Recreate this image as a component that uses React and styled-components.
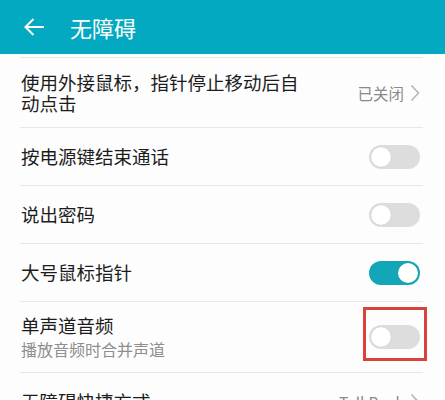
import React from 'react';
import styled, { createGlobalStyle } from 'styled-components';

const GlobalStyle = createGlobalStyle`
  html, body {
    margin: 0;
    padding: 0;
    background: #fdfdfd;
    overflow: hidden;
  }
  body {
    font-family: "Noto Sans CJK SC", "Noto Sans", sans-serif;
  }
`;

const Page = styled.div`
  width: 445px;
  height: 400px;
  overflow: hidden;
  background: #fdfdfd;
`;

const Header = styled.header`
  height: 54px;
  background: #02a9c0;
  display: flex;
  align-items: center;
  padding-left: 23px;
  gap: 25px;
  box-sizing: border-box;
`;

const Title = styled.h1`
  margin: 0;
  font-size: 22px;
  font-weight: 400;
  color: #ffffff;
  line-height: 1;
`;

const List = styled.div`
  padding-top: 3px;
`;

const Row = styled.div`
  margin: 0 22px 0 20px;
  border-top: 1px solid #e8e8e8;
  min-height: ${(p) => p.$height}px;
  box-sizing: border-box;
  display: flex;
  align-items: center;
  justify-content: space-between;
  padding: 0 3px 0 1px;
`;

const TextBlock = styled.div`
  display: flex;
  flex-direction: column;
  max-width: ${(p) => p.$max || 320}px;
`;

const Label = styled.div`
  font-size: 18.5px;
  line-height: 21px;
  color: #1c1c1c;
`;

const Sub = styled.div`
  font-size: 16px;
  line-height: 20px;
  margin-top: 3px;
  color: #8e8e8e;
`;

const Value = styled.div`
  display: flex;
  align-items: center;
  gap: 6px;
  font-size: 15.5px;
  color: #8a8a8a;
`;

const Track = styled.div`
  position: relative;
  width: 51px;
  height: 24px;
  border-radius: 12px;
  background: ${(p) => (p.$on ? '#12a6b8' : '#dddddd')};
  display: flex;
  align-items: center;
  justify-content: ${(p) => (p.$on ? 'flex-end' : 'flex-start')};
  padding: 0 2px;
  box-sizing: border-box;
`;

const Knob = styled.div`
  width: 20px;
  height: 20px;
  border-radius: 50%;
  background: #ffffff;
  box-shadow: 0 0 1px rgba(0, 0, 0, 0.2);
`;

const Highlight = styled.div`
  position: absolute;
  left: -6px;
  right: -7px;
  top: -18px;
  bottom: -12px;
  border: 3px solid #d8433e;
`;

function Chevron() {
  return (
    <svg width="10" height="18" viewBox="0 0 10 18">
      <polyline points="1.5,1.5 8.5,9 1.5,16.5" fill="none" stroke="#b5b5b5" strokeWidth="1.6" />
    </svg>
  );
}

function BackArrow() {
  return (
    <svg width="22" height="20" viewBox="0 0 22 20">
      <path d="M21 10 H2.5 M10.5 2 L2.5 10 L10.5 18" fill="none" stroke="#ffffff" strokeWidth="2" />
    </svg>
  );
}

function Switch({ on, marked }) {
  return (
    <Track $on={on}>
      <Knob />
      {marked && <Highlight />}
    </Track>
  );
}

export default function App() {
  return (
    <Page>
      <GlobalStyle />
      <Header>
        <BackArrow />
        <Title>无障碍</Title>
      </Header>
      <List>
        <Row $height={70}>
          <TextBlock $max={290}>
            <Label>使用外接鼠标，指针停止移动后自动点击</Label>
          </TextBlock>
          <Value>
            已关闭
            <Chevron />
          </Value>
        </Row>
        <Row $height={58}>
          <Label>按电源键结束通话</Label>
          <Switch />
        </Row>
        <Row $height={58}>
          <Label>说出密码</Label>
          <Switch />
        </Row>
        <Row $height={58}>
          <Label>大号鼠标指针</Label>
          <Switch on />
        </Row>
        <Row $height={71}>
          <TextBlock>
            <Label>单声道音频</Label>
            <Sub>播放音频时合并声道</Sub>
          </TextBlock>
          <Switch marked />
        </Row>
        <Row $height={58}>
          <Label>无障碍快捷方式</Label>
          <Value>
            TalkBack
            <Chevron />
          </Value>
        </Row>
      </List>
    </Page>
  );
}
